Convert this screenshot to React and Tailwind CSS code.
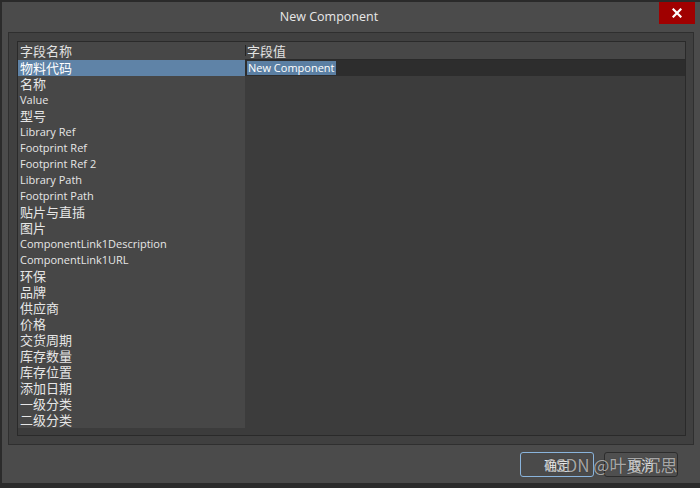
import React from "react";

const cjk = { fontFamily: '"Noto Sans CJK SC", "Microsoft YaHei", sans-serif' };
const lat = { fontFamily: '"Open Sans", "Noto Sans", sans-serif' };

const rows = [
  ["物料代码", "zh"],
  ["名称", "zh"],
  ["Value", "en"],
  ["型号", "zh"],
  ["Library Ref", "en"],
  ["Footprint Ref", "en"],
  ["Footprint Ref 2", "en"],
  ["Library Path", "en"],
  ["Footprint Path", "en"],
  ["贴片与直插", "zh"],
  ["图片", "zh"],
  ["ComponentLink1Description", "en"],
  ["ComponentLink1URL", "en"],
  ["环保", "zh"],
  ["品牌", "zh"],
  ["供应商", "zh"],
  ["价格", "zh"],
  ["交货周期", "zh"],
  ["库存数量", "zh"],
  ["库存位置", "zh"],
  ["添加日期", "zh"],
  ["一级分类", "zh"],
  ["二级分类", "zh"],
];

export default function App() {
  return (
    <div className="w-[700px] h-[488px] bg-[#2b2b2b] flex flex-col overflow-hidden">
      <div className="h-[2px] shrink-0 bg-[#2a2a2a]" />
      <div className="relative h-[482px] shrink-0 bg-[#4b4b4b] border-l-2 border-b border-[#2b2b2b] flex flex-col">
        {/* title bar */}
        <div className="h-[30px] shrink-0 flex items-center justify-center pr-[44px]">
          <span className="text-[12.5px] leading-[16px] text-[#e8e8e8]" style={lat}>New Component</span>
        </div>
        <div className="absolute top-0 right-[5px] w-[36px] h-[22px] bg-[#a00000] flex items-center justify-center">
          <svg width="10" height="10" viewBox="0 0 10 10">
            <path d="M1.5 1.5 L8.5 8.5 M8.5 1.5 L1.5 8.5" stroke="#ffffff" strokeWidth="2.2" strokeLinecap="square" />
          </svg>
        </div>

        {/* panel */}
        <div className="ml-[6px] w-[686px] h-[413px] shrink-0 border border-[#2f2f2f] bg-[#404040] pt-[8px] pl-[8px]">
          <div className="w-[669px] h-[395px] border border-[#2a2a2a] bg-[#3c3c3c] flex flex-col">
            {/* header */}
            <div className="h-[18px] shrink-0 flex bg-[#474747]">
              <div className="w-[227px] pl-[2px] text-[13px] leading-[17px] text-[#e2e2e2]" style={cjk}>
                字段名称
              </div>
              <div className="flex-1 flex items-center border-b border-[#2a2a2a]">
                <div className="w-[1px] h-[11px] bg-[#262626]" />
                <span className="ml-[1px] text-[13px] leading-[17px] text-[#e2e2e2]" style={cjk}>字段值</span>
              </div>
            </div>
            {/* body */}
            <div className="flex flex-1">
              <div className="w-[227px] flex flex-col">
                {rows.map(([label, kind], i) => (
                  <div
                    key={i}
                    className={
                      "h-[16px] pl-[2px] " +
                      (i === 0 ? "bg-[#5f83a7] text-white" : "bg-[#474747] text-[#e6e6e6]")
                    }
                  >
                    {kind === "zh" ? (
                      <div className="text-[13px] leading-[15px]" style={cjk}>{label}</div>
                    ) : (
                      <div className="text-[11px] leading-[15px]" style={lat}>{label}</div>
                    )}
                  </div>
                ))}
              </div>
              <div className="flex-1 flex flex-col">
                <div className="h-[16px] bg-[#2d2d2d] flex items-center pl-[2px]">
                  <span className="h-[14px] px-[1px] bg-[#5b7fa3] text-white text-[11px] leading-[14px]" style={lat}>
                    New Component
                  </span>
                </div>
              </div>
            </div>
          </div>
        </div>

        {/* footer */}
        <div className="flex-1 flex justify-end items-start pt-[7px] pr-[22px] gap-[10px]">
          <button className="w-[74px] h-[25px] rounded-[3px] border border-[#8ab4dc] bg-[#4a4a4a] text-[13px] text-[#e8e8e8] flex items-center justify-center" style={cjk}>
            确定
          </button>
          <button className="w-[74px] h-[25px] rounded-[3px] border border-[#2c2c2c] bg-[#4f4f4f] text-[13px] text-[#e8e8e8] flex items-center justify-center" style={cjk}>
            取消
          </button>
        </div>

        {/* watermark */}
        <div
          className="absolute left-[543px] top-[451px] text-[17px] leading-[24px] text-[#ffffff]/60 whitespace-nowrap"
          style={{ ...cjk, textShadow: "0 0 1px rgba(0,0,0,0.6)" }}
        >
          CSDN @叶夏沉思
        </div>
      </div>
      <div className="flex-1 bg-[#2b2b2b]" />
    </div>
  );
}
